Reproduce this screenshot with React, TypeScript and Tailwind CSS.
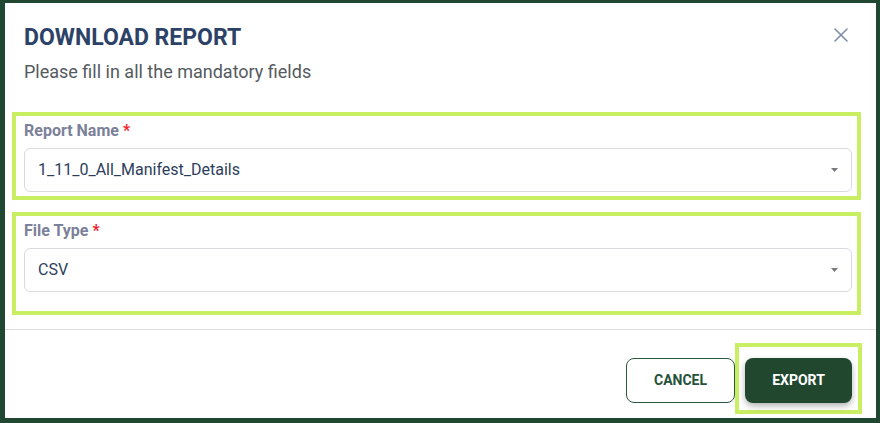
import { X } from "lucide-react";

const Caret = () => (
  <svg width="7" height="4" viewBox="0 0 7 4" className="shrink-0">
    <path d="M0 0h7L3.5 4z" fill="#777a7e" />
  </svg>
);

const SelectField = ({ label, value, extra }: { label: string; value: string; extra?: boolean }) => (
  <div
    className={`border-[4px] border-[#c8ee62] pl-[8px] pr-[5px] pt-[5px] ${extra ? "pb-[19px]" : "pb-[4px]"}`}
  >
    <div className="text-[16px] font-bold text-[#7b8199] leading-[20px] h-[20px]">
      {label} <span className="text-[#f0262e]">*</span>
    </div>
    <div className="mt-[7px] h-[44px] rounded-[6px] border border-[#d9dadd] flex items-center justify-between pl-[13px] pr-[13px]">
      <span className="text-[16px] text-[#2d3e5c]">{value}</span>
      <Caret />
    </div>
  </div>
);

export default function App() {
  return (
    <div className="h-[423px] w-[880px] bg-[#1f4731] pt-[3px] pl-[5px] pr-[4px] pb-[5px] font-['Roboto',sans-serif]">
      <div className="h-full bg-white flex flex-col">
        <div className="flex justify-between pl-[19px] pr-[23px] pt-[21px]">
          <div>
            <h1 className="text-[23px] font-bold text-[#2c4266] leading-[28px]">DOWNLOAD REPORT</h1>
            <p className="mt-[8px] text-[18px] text-[#555a60] leading-[24px]">
              Please fill in all the mandatory fields
            </p>
          </div>
          <X size={24} strokeWidth={1.5} color="#7b8aa6" className="-mt-[1px]" />
        </div>

        <div className="mt-[28px] pl-[7px] pr-[15px] flex flex-col gap-[12px]">
          <SelectField label="Report Name" value="1_11_0_All_Manifest_Details" />
          <SelectField label="File Type" value="CSV" extra />
        </div>

        <div className="mt-[14px] border-t border-[#dcdde0]" />

        <div className="flex justify-end items-start pr-[14px] pt-[13px]">
          <button className="mt-[15px] h-[45px] w-[109px] rounded-[8px] border border-[#2a5a3c] text-[14px] font-bold text-[#26513a]">
            CANCEL
          </button>
          <div className="border-[4px] border-[#c8ee62] pt-[11px] pb-[7px] px-[6px]">
            <button className="h-[45px] w-[107px] rounded-[8px] bg-[#21472f] text-[14px] font-bold text-white shadow-[0_3px_6px_rgba(0,0,0,0.3)]">
              EXPORT
            </button>
          </div>
        </div>
      </div>
    </div>
  );
}
